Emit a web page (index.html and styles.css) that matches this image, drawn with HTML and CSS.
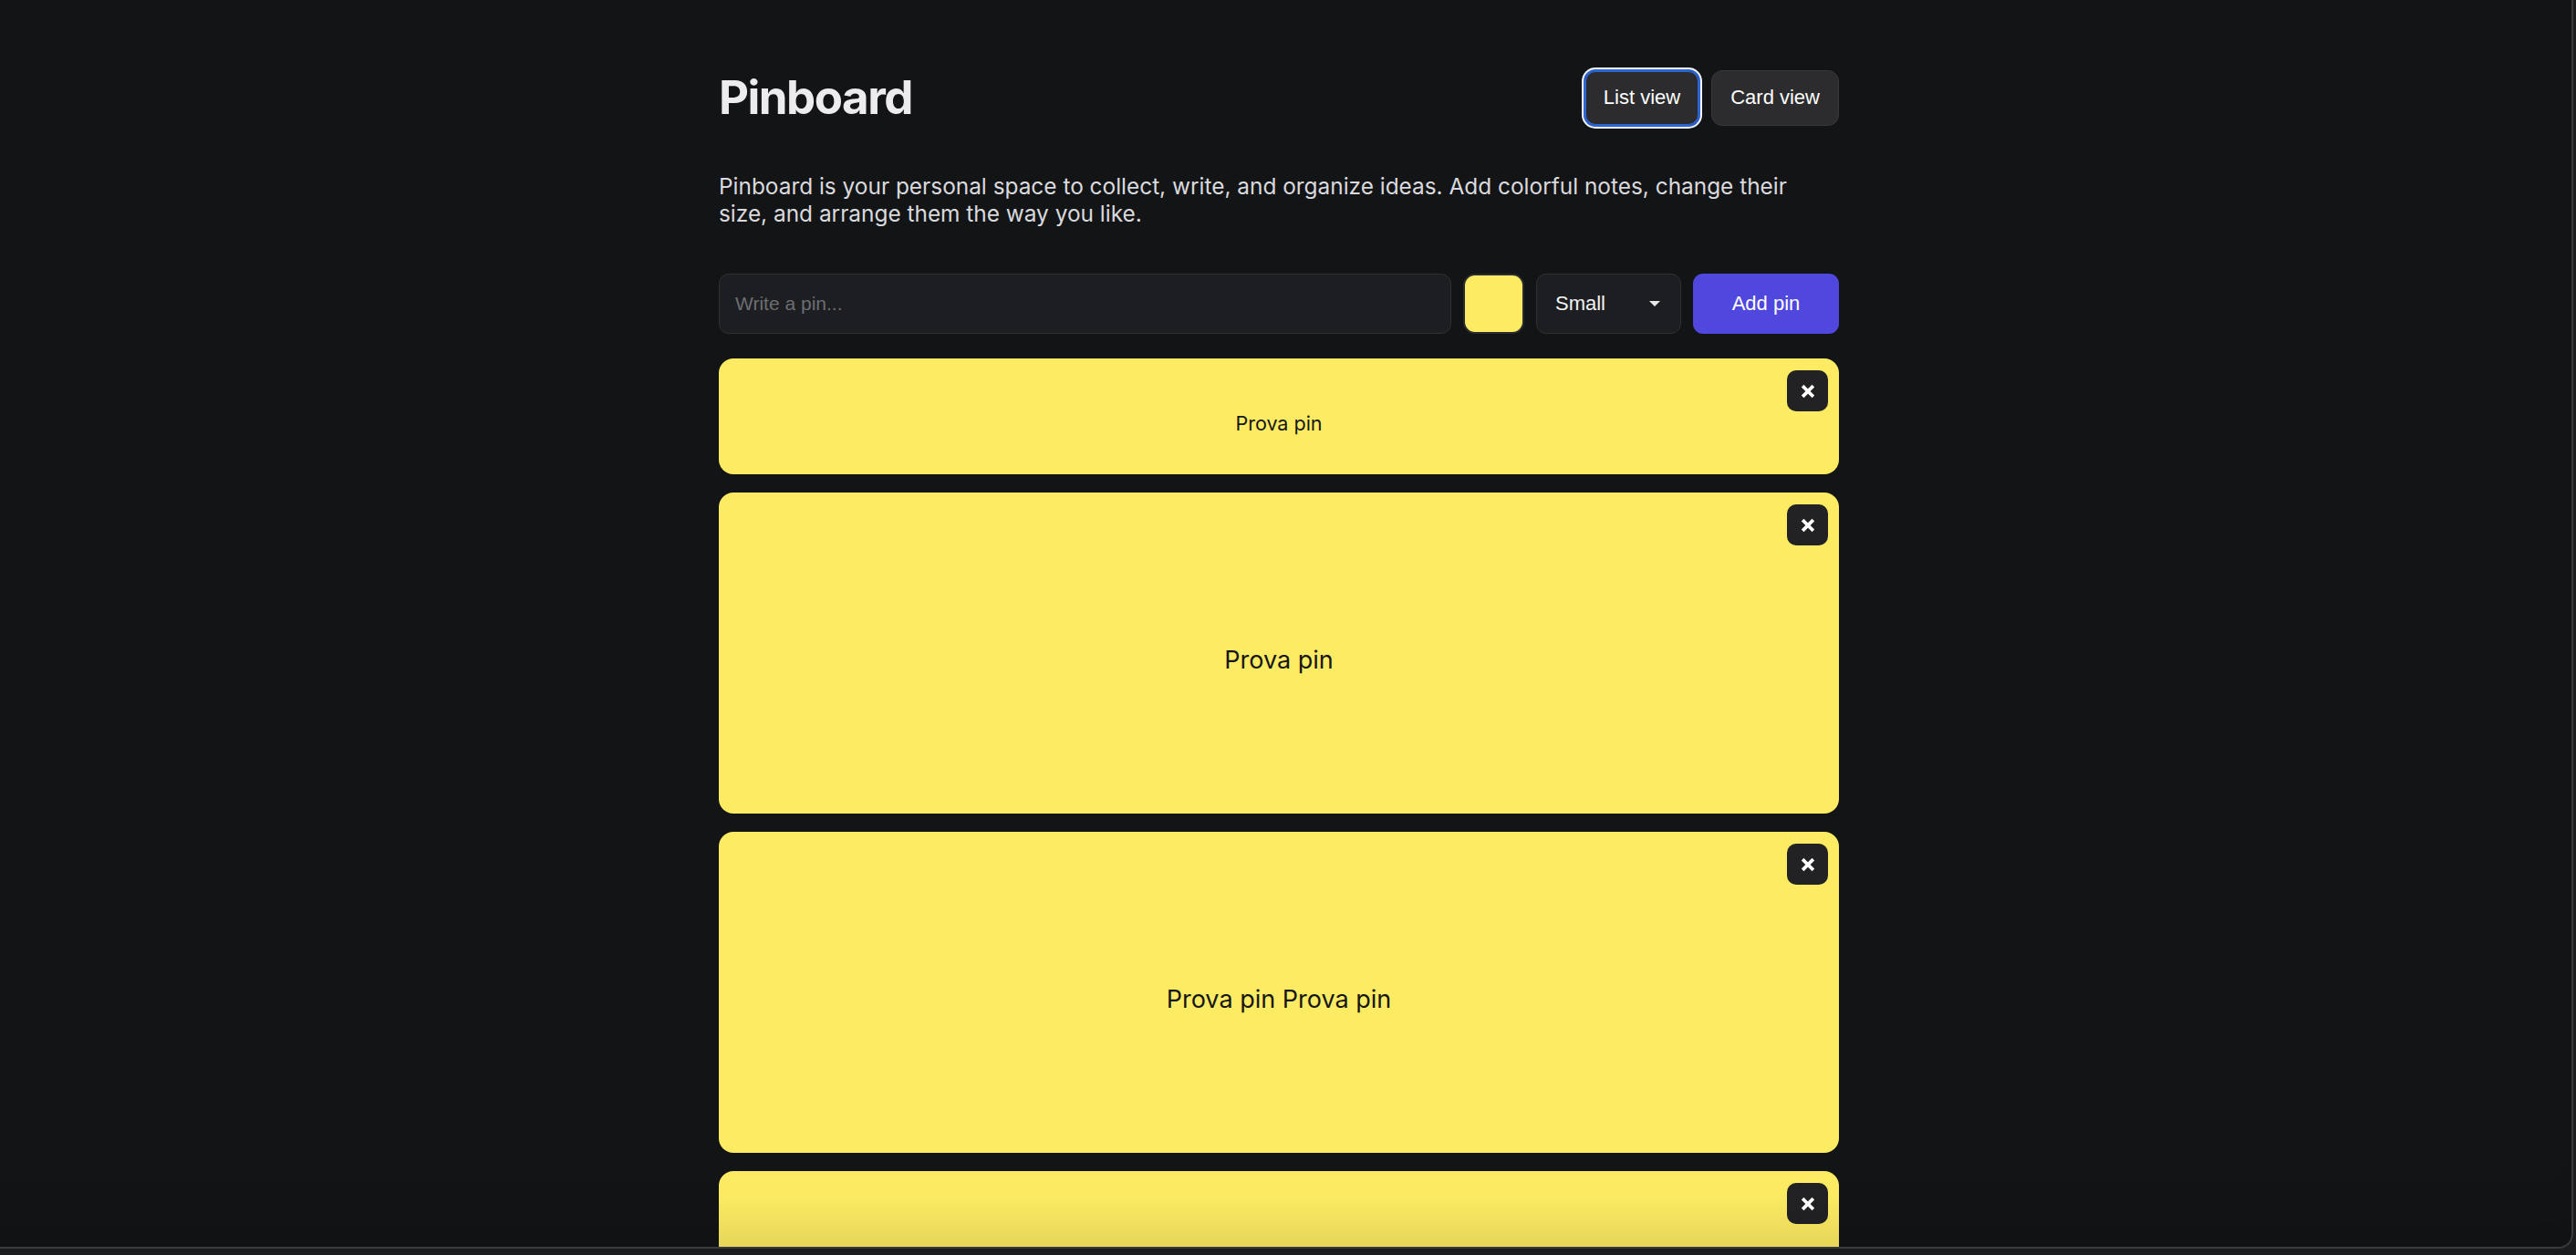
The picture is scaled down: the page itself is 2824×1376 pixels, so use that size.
FILE: index.html
```html
<!DOCTYPE html>
<html lang="en">
<head>
<meta charset="utf-8">
<title>Pinboard</title>
<link rel="stylesheet" href="styles.css">
</head>
<body>
<div class="viewport">
  <main class="app">
    <header class="top">
      <h1 class="title">Pinboard</h1>
      <div class="views">
        <button class="view-btn is-active" type="button">List view</button>
        <button class="view-btn" type="button">Card view</button>
      </div>
    </header>
    <p class="intro">Pinboard is your personal space to collect, write, and organize ideas. Add colorful notes, change their<br>size, and arrange them the way you like.</p>
    <form class="composer">
      <input class="pin-input" type="text" placeholder="Write a pin...">
      <span class="swatch-wrap"><span class="swatch"></span></span>
      <div class="size-select"><span>Small</span><span class="caret"></span></div>
      <button class="add-btn" type="button">Add pin</button>
    </form>
    <section class="pins">
      <article class="pin pin-small">
        <p class="pin-text">Prova pin</p>
        <button class="pin-close" type="button"><svg viewBox="0 0 16 16" width="16" height="16"><path d="M3.5 3.5 L12.5 12.5 M12.5 3.5 L3.5 12.5" stroke="#fff" stroke-width="3.8" stroke-linecap="square" fill="none"/></svg></button>
      </article>
      <article class="pin pin-large">
        <p class="pin-text">Prova pin</p>
        <button class="pin-close" type="button"><svg viewBox="0 0 16 16" width="16" height="16"><path d="M3.5 3.5 L12.5 12.5 M12.5 3.5 L3.5 12.5" stroke="#fff" stroke-width="3.8" stroke-linecap="square" fill="none"/></svg></button>
      </article>
      <article class="pin pin-large">
        <p class="pin-text">Prova pin Prova pin</p>
        <button class="pin-close" type="button"><svg viewBox="0 0 16 16" width="16" height="16"><path d="M3.5 3.5 L12.5 12.5 M12.5 3.5 L3.5 12.5" stroke="#fff" stroke-width="3.8" stroke-linecap="square" fill="none"/></svg></button>
      </article>
      <article class="pin pin-large">
        <p class="pin-text">Prova pin</p>
        <button class="pin-close" type="button"><svg viewBox="0 0 16 16" width="16" height="16"><path d="M3.5 3.5 L12.5 12.5 M12.5 3.5 L3.5 12.5" stroke="#fff" stroke-width="3.8" stroke-linecap="square" fill="none"/></svg></button>
      </article>
    </section>
  </main>
</div>
<div class="frame"></div>
</body>
</html>
```
FILE: styles.css
```css
html {
  overflow: hidden;
  background: #131416;
}
body {
  margin: 0;
  background: #131416;
  color: #ececef;
  font-family: "Inter", "Noto Sans", sans-serif;
}
.viewport {
  padding-right: 20px;
}
.app {
  width: 1228px;
  margin: 0 auto;
  padding-top: 74px;
}
.top {
  height: 66px;
  display: flex;
  align-items: center;
  justify-content: space-between;
}
.title {
  margin: 0;
  font-size: 51px;
  font-weight: 700;
  letter-spacing: -1.5px;
  color: #ececef;
  line-height: 1.2;
}
.views {
  display: flex;
  gap: 13px;
  align-items: center;
}
.view-btn {
  height: 61px;
  padding: 0 20px;
  font-family: "Liberation Sans", Arial, sans-serif;
  font-size: 22px;
  color: #fff;
  background: #2c2c2e;
  border: 1px solid #38383a;
  border-radius: 12px;
}
.view-btn.is-active {
  border-color: #2d66d4;
  box-shadow: inset 0 0 0 1px #2d66d4, 0 0 0 1px #2d66d4, 0 0 0 3px #f4f6fb;
}
.intro {
  margin: 49px 0 51px;
  font-size: 24.4px;
  line-height: 30px;
  color: #dadade;
}
.composer {
  display: grid;
  grid-template-columns: 1fr 67px 159px 160px;
  gap: 13px;
  height: 66px;
  margin: 0;
}
.pin-input {
  box-sizing: border-box;
  height: 66px;
  padding: 0 17px;
  background: #1d1e21;
  border: 1px solid #303135;
  border-radius: 11px;
  color: #fff;
  font-family: "Liberation Sans", Arial, sans-serif;
  font-size: 21px;
  outline: none;
}
.pin-input::placeholder {
  color: #6d6e73;
}
.swatch-wrap {
  box-sizing: border-box;
  padding: 2px;
  background: #2a2b2e;
  border-radius: 13px;
  display: flex;
}
.swatch {
  flex: 1;
  background: #fdec63;
  border-radius: 11px;
}
.size-select {
  box-sizing: border-box;
  display: flex;
  align-items: center;
  justify-content: space-between;
  padding: 0 22px 0 20px;
  background: #1d1e21;
  border: 1px solid #303135;
  border-radius: 11px;
  color: #f2f2f4;
  font-family: "Liberation Sans", Arial, sans-serif;
  font-size: 22px;
}
.caret {
  width: 0;
  height: 0;
  border-left: 6px solid transparent;
  border-right: 6px solid transparent;
  border-top: 6px solid #e8e8ea;
}
.add-btn {
  height: 66px;
  background: #4f47de;
  color: #fff;
  border: none;
  border-radius: 11px;
  font-family: "Liberation Sans", Arial, sans-serif;
  font-size: 22px;
}
.pins {
  margin-top: 27px;
  display: flex;
  flex-direction: column;
  gap: 20px;
}
.pin {
  position: relative;
  box-sizing: border-box;
  display: flex;
  align-items: center;
  justify-content: center;
  padding: 14px 24px 0;
  background: #fdec63;
  border-radius: 16px;
  color: #161616;
}
.pin-small {
  height: 127px;
}
.pin-large {
  height: 352px;
}
.pin-text {
  margin: 0;
  font-size: 27px;
}
.pin-small .pin-text {
  font-size: 21.5px;
}
.pin-close {
  position: absolute;
  top: 13px;
  right: 12px;
  width: 45px;
  height: 45px;
  padding: 0;
  display: flex;
  align-items: center;
  justify-content: center;
  background: #222224;
  border: none;
  border-radius: 10px;
}
.frame {
  position: fixed;
  top: -20px;
  left: -20px;
  right: 3px;
  bottom: 7px;
  border-right: 2px solid #3a3b3e;
  border-bottom: 2px solid #3a3b3e;
  border-bottom-right-radius: 16px;
  box-shadow: 0 0 0 20px #1b1c1e, inset 0 -70px 60px -50px rgba(0, 0, 0, 0.12);
  pointer-events: none;
}
```
